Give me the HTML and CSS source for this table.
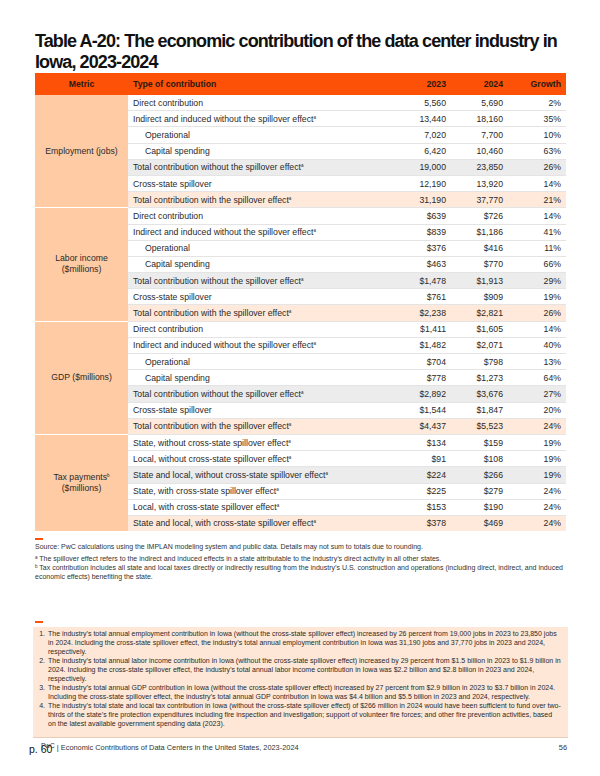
FILE: index.html
```html
<!DOCTYPE html>
<html>
<head>
<meta charset="utf-8">
<link rel="stylesheet" href="styles.css">
</head>
<body>
<div class="page">
  <h1 class="title">Table A-20: The economic contribution of the data center industry in Iowa, 2023-2024</h1>
  <table class="data">
    <colgroup>
      <col class="c-metric"><col class="c-type"><col class="c-num1"><col class="c-num2"><col class="c-num3">
    </colgroup>
    <thead>
      <tr><th class="metric-h">Metric</th><th class="type-h">Type of contribution</th><th>2023</th><th>2024</th><th>Growth</th></tr>
    </thead>
    <tbody>
      <tr class="first"><td class="metric" rowspan="7">Employment (jobs)</td><td>Direct contribution</td><td>5,560</td><td>5,690</td><td>2%</td></tr>
      <tr><td>Indirect and induced without the spillover effect<sup>a</sup></td><td>13,440</td><td>18,160</td><td>35%</td></tr>
      <tr><td class="ind">Operational</td><td>7,020</td><td>7,700</td><td>10%</td></tr>
      <tr><td class="ind">Capital spending</td><td>6,420</td><td>10,460</td><td>63%</td></tr>
      <tr class="gray"><td>Total contribution without the spillover effect<sup>a</sup></td><td>19,000</td><td>23,850</td><td>26%</td></tr>
      <tr><td>Cross-state spillover</td><td>12,190</td><td>13,920</td><td>14%</td></tr>
      <tr class="peach"><td>Total contribution with the spillover effect<sup>a</sup></td><td>31,190</td><td>37,770</td><td>21%</td></tr>

      <tr class="first"><td class="metric" rowspan="7">Labor income<br>($millions)</td><td>Direct contribution</td><td>$639</td><td>$726</td><td>14%</td></tr>
      <tr><td>Indirect and induced without the spillover effect<sup>a</sup></td><td>$839</td><td>$1,186</td><td>41%</td></tr>
      <tr><td class="ind">Operational</td><td>$376</td><td>$416</td><td>11%</td></tr>
      <tr><td class="ind">Capital spending</td><td>$463</td><td>$770</td><td>66%</td></tr>
      <tr class="gray"><td>Total contribution without the spillover effect<sup>a</sup></td><td>$1,478</td><td>$1,913</td><td>29%</td></tr>
      <tr><td>Cross-state spillover</td><td>$761</td><td>$909</td><td>19%</td></tr>
      <tr class="peach"><td>Total contribution with the spillover effect<sup>a</sup></td><td>$2,238</td><td>$2,821</td><td>26%</td></tr>

      <tr class="first"><td class="metric" rowspan="7">GDP ($millions)</td><td>Direct contribution</td><td>$1,411</td><td>$1,605</td><td>14%</td></tr>
      <tr><td>Indirect and induced without the spillover effect<sup>a</sup></td><td>$1,482</td><td>$2,071</td><td>40%</td></tr>
      <tr><td class="ind">Operational</td><td>$704</td><td>$798</td><td>13%</td></tr>
      <tr><td class="ind">Capital spending</td><td>$778</td><td>$1,273</td><td>64%</td></tr>
      <tr class="gray"><td>Total contribution without the spillover effect<sup>a</sup></td><td>$2,892</td><td>$3,676</td><td>27%</td></tr>
      <tr><td>Cross-state spillover</td><td>$1,544</td><td>$1,847</td><td>20%</td></tr>
      <tr class="peach"><td>Total contribution with the spillover effect<sup>a</sup></td><td>$4,437</td><td>$5,523</td><td>24%</td></tr>

      <tr class="first"><td class="metric" rowspan="6">Tax payments<sup>b</sup><br>($millions)</td><td>State, without cross-state spillover effect<sup>a</sup></td><td>$134</td><td>$159</td><td>19%</td></tr>
      <tr><td>Local, without cross-state spillover effect<sup>a</sup></td><td>$91</td><td>$108</td><td>19%</td></tr>
      <tr class="gray"><td>State and local, without cross-state spillover effect<sup>a</sup></td><td>$224</td><td>$266</td><td>19%</td></tr>
      <tr><td>State, with cross-state spillover effect<sup>a</sup></td><td>$225</td><td>$279</td><td>24%</td></tr>
      <tr><td>Local, with cross-state spillover effect<sup>a</sup></td><td>$153</td><td>$190</td><td>24%</td></tr>
      <tr class="peach"><td>State and local, with cross-state spillover effect<sup>a</sup></td><td>$378</td><td>$469</td><td>24%</td></tr>
    </tbody>
  </table>

  <div class="notes">
    <div class="dash"></div>
    <p class="source">Source: PwC calculations using the IMPLAN modeling system and public data. Details may not sum to totals due to rounding.</p>
    <p class="fn"><sup>a</sup> The spillover effect refers to the indirect and induced effects in a state attributable to the industry’s direct activity in all other states.</p>
    <p class="fn"><sup>b</sup> Tax contribution includes all state and local taxes directly or indirectly resulting from the industry’s U.S. construction and operations (including direct, indirect, and induced economic effects) benefiting the state.</p>
  </div>

  <div class="dash dash2"></div>
  <div class="box">
    <ol class="points">
      <li>The industry’s total annual employment contribution in Iowa (without the cross-state spillover effect) increased by 26 percent from 19,000 jobs in 2023 to 23,850 jobs in 2024. Including the cross-state spillover effect, the industry’s total annual employment contribution in Iowa was 31,190 jobs and 37,770 jobs in 2023 and 2024, respectively.</li>
      <li>The industry’s total annual labor income contribution in Iowa (without the cross-state spillover effect) increased by 29 percent from $1.5 billion in 2023 to $1.9 billion in 2024. Including the cross-state spillover effect, the industry’s total annual labor income contribution in Iowa was $2.2 billion and $2.8 billion in 2023 and 2024, respectively.</li>
      <li>The industry’s total annual GDP contribution in Iowa (without the cross-state spillover effect) increased by 27 percent from $2.9 billion in 2023 to $3.7 billion in 2024. Including the cross-state spillover effect, the industry’s total annual GDP contribution in Iowa was $4.4 billion and $5.5 billion in 2023 and 2024, respectively.</li>
      <li>The industry’s total state and local tax contribution in Iowa (without the cross-state spillover effect) of $266 million in 2024 would have been sufficient to fund over two-thirds of the state’s fire protection expenditures including fire inspection and investigation; support of volunteer fire forces; and other fire prevention activities, based on the latest available government spending data (2023).</li>
    </ol>
  </div>

  <div class="footer">
    <span class="foot-text"><span class="pwc">PwC</span> | Economic Contributions of Data Centers in the United States, 2023-2024</span>
    <span class="foot-num">56</span>
    <span class="pagelabel">p. 60</span>
  </div>
</div>
</body>
</html>
```

FILE: styles.css
```css
html, body {
  margin: 0;
  padding: 0;
  background: #ffffff;
}
.page {
  width: 600px;
  height: 776px;
  box-sizing: border-box;
  padding: 31px 34px 0 35px;
  font-family: "Liberation Sans", Arial, sans-serif;
  color: #222;
  position: relative;
}
.title {
  margin: 0;
  font-size: 18px;
  line-height: 21px;
  font-weight: bold;
  letter-spacing: -0.9px;
  color: #111;
}
.data {
  width: 531px;
  border-collapse: collapse;
  table-layout: fixed;
  font-size: 8.7px;
  color: #2a2a2a;
}
.c-metric { width: 93px; }
.c-type { width: 272px; }
.c-num1 { width: 51px; }
.c-num2 { width: 57px; }
.c-num3 { width: 58px; }
.data thead th {
  background: #fd5108;
  color: #2b1a10;
  font-weight: bold;
  height: 22px;
  padding: 0 5px;
  text-align: right;
}
.data thead th.metric-h { text-align: center; }
.data thead th.type-h { text-align: left; }
.data td {
  height: 15.2px;
  padding: 0 5px;
  text-align: right;
  border-top: 1px solid #e4e4e4;
  white-space: nowrap;
}
.data td:nth-child(1) { text-align: left; }
.data tr.first td { text-align: right; }
.data tr.first td:nth-child(2) { text-align: left; }
.data td.metric {
  background: #fecba4;
  text-align: center !important;
  vertical-align: middle;
  border-top: 1px solid #ffffff;
  white-space: normal;
  line-height: 11px;
}
.data tbody tr:first-child td { border-top: none; }
.data td.ind { padding-left: 17px; }
.data tr.gray td { background: #ececec; }
.data tr.peach td { background: #fee9da; }
.data sup {
  font-size: 4.5px;
  vertical-align: 3px;
  line-height: 0;
}
.notes { margin-top: 0; }
.dash {
  width: 8px;
  height: 2px;
  background: #fd5108;
  margin-top: 7px;
}
.source, .fn {
  margin: 0;
  font-size: 7px;
  line-height: 9px;
  color: #333;
}
.source { margin-top: 2px; margin-bottom: 3px; }
.fn sup {
  font-size: 4.5px;
  vertical-align: 2px;
  line-height: 0;
}
.dash2 {
  margin-top: 40px;
}
.box {
  margin-top: 4px;
  margin-left: -2px;
  width: 535px;
  background: #fee7d6;
  box-shadow: 0 1px 0 #e9cdb8;
  padding: 2px 0 9px 0;
}
.points {
  margin: 0;
  padding: 0 7px 0 14px;
  font-size: 7px;
  line-height: 9px;
  color: #2a2a2a;
}
.points li { padding-left: 1px; }
.footer {
  position: relative;
  margin-top: 6px;
  display: flex;
  justify-content: space-between;
  font-size: 7.4px;
  color: #333;
  width: 532px;
}
.foot-text { padding-left: 6px; }
.pwc {
  font-size: 6.5px;
  position: relative;
  top: -2px;
}
.pagelabel {
  position: absolute;
  left: -6px;
  top: 1px;
  font-size: 10.5px;
  line-height: 1;
  color: #111;
}
```
